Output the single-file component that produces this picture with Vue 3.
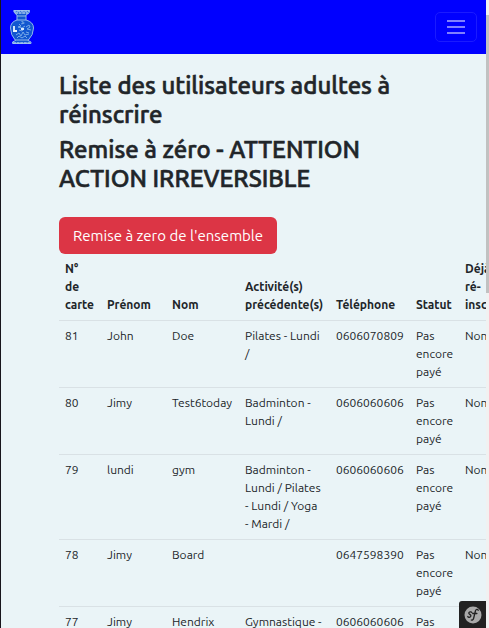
<script setup>
const columns = [
  { key: 'card', label: 'N° de carte' },
  { key: 'first', label: 'Prénom' },
  { key: 'last', label: 'Nom' },
  { key: 'activities', label: 'Activité(s) précédente(s)' },
  { key: 'phone', label: 'Téléphone' },
  { key: 'status', label: 'Statut' },
  { key: 'again', label: 'Déjà ré-inscrit' }
]
const status = 'Pas encore payé'
const members = [
  { card: 81, first: 'John', last: 'Doe', activities: 'Pilates - Lundi /', phone: '0606070809', status, again: 'Non' },
  { card: 80, first: 'Jimy', last: 'Test6today', activities: 'Badminton - Lundi /', phone: '0606060606', status, again: 'Non' },
  { card: 79, first: 'lundi', last: 'gym', activities: 'Badminton - Lundi / Pilates - Lundi / Yoga - Mardi /', phone: '0606060606', status, again: 'Non' },
  { card: 78, first: 'Jimy', last: 'Board', activities: '', phone: '0647598390', status, again: 'Non' },
  { card: 77, first: 'Jimy', last: 'Hendrix', activities: 'Gymnastique - Lundi /', phone: '0606060606', status, again: 'Non' }
]
</script>

<template>
  <div class="window">
    <div class="page">
      <header class="navbar">
        <a class="brand" href="#" aria-label="Accueil">
          <svg width="26" height="36" viewBox="0 0 26 36">
            <path d="M5 1.5h15.500l-.5 2.500-3 2v5q7.500 2 7.500 8 0 7-5.500 12.500l3 1.500v1.500H3.500V33l3-1.500Q1.500 26 1.500 19q0-6 6.500-8V6L5.500 4z" fill="#1257d0" stroke="#8fb8ec" />
            <path d="M4.500 2h16M6 4h13M4 34h18" stroke="#a9c8ee" stroke-width="1.400" stroke-dasharray="3 .6" />
            <path d="M8 7h9M8 11h9M6 31h14" stroke="#90b8ea" />
            <path d="M12.500 12.500l2 .5-2 2 3-1M10 15l2 2-3 1 4 1 3-2M17 18l3-2 1 2-3 2 4 1M10 21l3 1 2-3M7 26l3-2 2 3 2-4 2 3 4-1M8 29l2-2 3 2 3-2 2 2M17 23l3 1" fill="none" stroke="#78aae8" />
            <path d="M5 17v5M4 22h4" fill="none" stroke="#e8f4ff" stroke-width="1.800" />
            <path d="M12 20h3" stroke="#d4e8ff" stroke-width="2" />
          </svg>
        </a>
        <button class="toggler" type="button" aria-label="Menu">
          <svg width="18" height="14" viewBox="0 0 18 14">
            <path d="M0 1h18M0 7h18M0 13h18" stroke="#8080ff" stroke-width="2" />
          </svg>
        </button>
      </header>
      <main class="content">
        <h1>Liste des utilisateurs adultes à réinscrire</h1>
        <h1>Remise à zéro - ATTENTION ACTION IRREVERSIBLE</h1>
        <button class="reset" type="button">Remise à zero de l'ensemble</button>
        <table>
          <colgroup>
            <col v-for="c in columns" :key="c.key" :class="c.key">
          </colgroup>
          <thead>
            <tr><th v-for="c in columns" :key="c.key" scope="col">{{ c.label }}</th></tr>
          </thead>
          <tbody>
            <tr v-for="m in members" :key="m.card">
              <td v-for="c in columns" :key="c.key">{{ m[c.key] }}</td>
            </tr>
          </tbody>
        </table>
      </main>
      <button class="debug" type="button" aria-label="Symfony">
        <svg width="18" height="18" viewBox="0 0 18 18">
          <circle cx="9" cy="9" r="8.5" fill="#aaa" />
          <path d="M7.8 6.5c-.5-1.1-3.2-.7-3 .7.1 1.2 2.3 1.3 2.1 2.8-.2 1.5-2.7 1.7-3.1.5M14.2 4.3c-.5-1.4-2.3-1.1-2.8.7L9.7 12c-.4 1.6-1.3 2.6-2.4 2M8.7 7.5h4.2" fill="none" stroke="#222" stroke-width="1.3" stroke-linecap="round" />
        </svg>
      </button>
    </div>
    <div class="scrollbar"><div class="thumb"></div></div>
  </div>
</template>

<style>
body {
  background: #eaf4f7;
}
</style>

<style scoped>
.window {
  box-sizing: border-box;
  display: flex;
  height: 100vh;
  overflow: hidden;
  border-left: 1px solid #18151c;
  color: #212529;
  font-family: Ubuntu, "Noto Sans", sans-serif;
}
.page {
  position: relative;
  flex: 1;
  min-width: 0;
  overflow: hidden;
  background: #eaf4f7;
}
.navbar {
  display: flex;
  align-items: center;
  justify-content: space-between;
  box-sizing: border-box;
  height: 54px;
  padding: 0 9px 0 8px;
  background: #00f;
}
.brand {
  display: flex;
}
.toggler {
  display: flex;
  align-items: center;
  justify-content: center;
  width: 42px;
  height: 30px;
  padding: 0;
  border: 1px solid #1a1aff;
  border-radius: 5px;
  background: none;
}
.content {
  padding: 17px 0 0 58px;
}
h1 {
  margin: 0 72px 6px 0;
  font-size: 24px;
  font-weight: 500;
  line-height: 29px;
  -webkit-text-stroke: 0.025em currentColor;
}
.reset {
  display: block;
  height: 37px;
  margin-top: 24px;
  padding: 0 14px;
  border: 0;
  border-radius: 6px;
  background: #dc3545;
  color: #fff;
  font-family: inherit;
  font-size: 15px;
}
table {
  table-layout: fixed;
  width: 450px;
  border-collapse: collapse;
  font-size: 12px;
  line-height: 18px;
}
th,
td {
  padding: 6px 7px 6px 6px;
  border-bottom: 1px solid #d9e1e5;
  text-align: left;
  vertical-align: top;
}
th {
  vertical-align: bottom;
}
.card { width: 42px; }
.first { width: 65px; }
.last { width: 73px; }
.activities { width: 91px; }
.phone { width: 80px; }
.status { width: 49px; }
.debug {
  position: absolute;
  right: 0;
  bottom: 0;
  display: flex;
  align-items: center;
  justify-content: center;
  width: 27px;
  height: 27px;
  padding: 0;
  border: 0;
  border-radius: 3px 0 0;
  background: #222;
}
.scrollbar {
  width: 3px;
  padding-top: 15px;
  background: #f1f1f1;
}
.thumb {
  height: 278px;
  background: #c1c1c1;
}
</style>
